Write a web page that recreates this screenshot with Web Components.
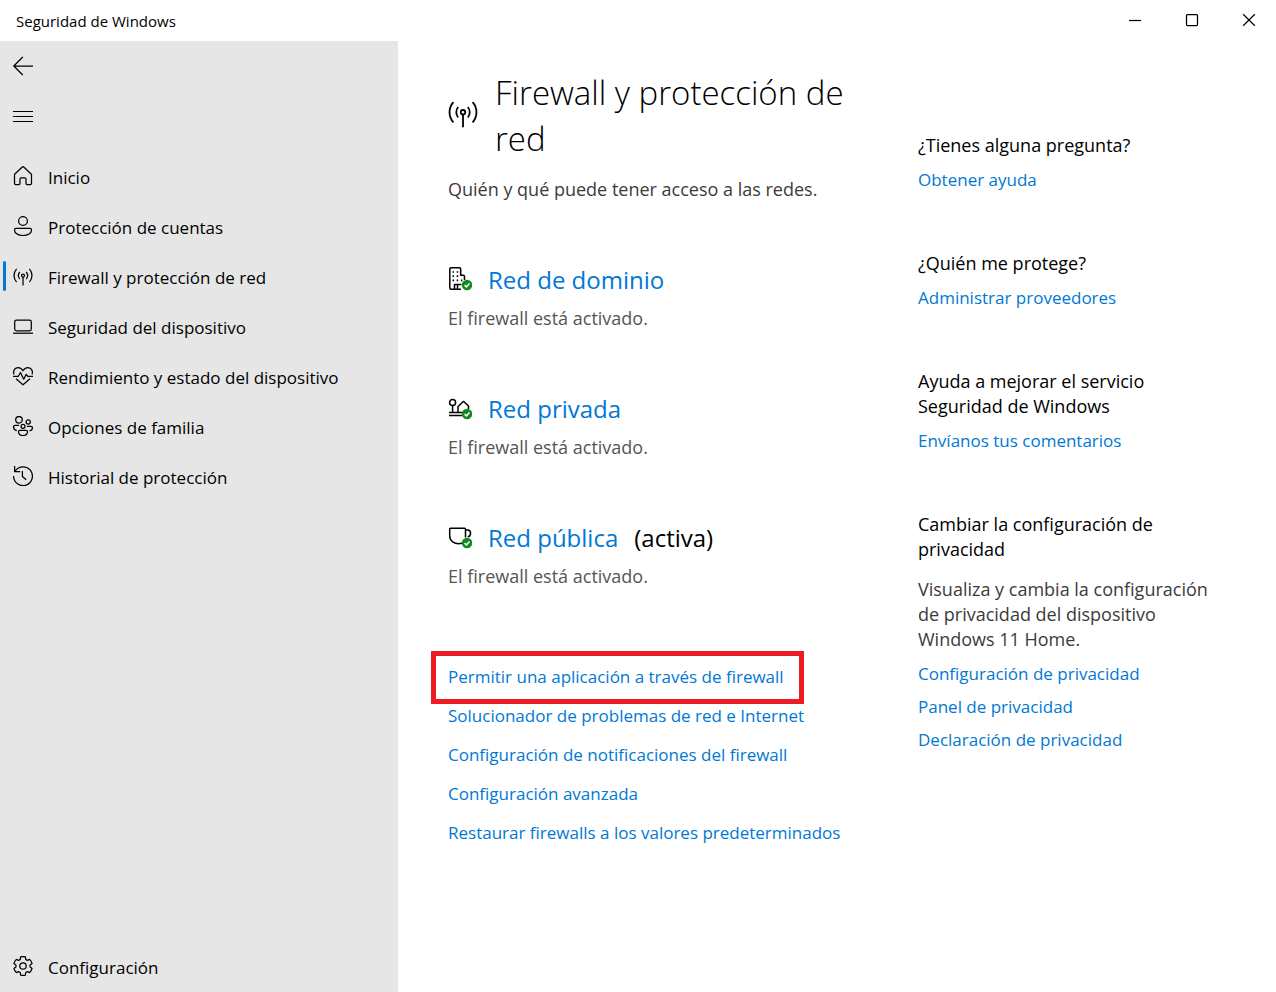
<!DOCTYPE html>
<html lang="es">
<head>
<meta charset="utf-8">
<meta name="viewport" content="width=device-width, initial-scale=1">
<title>Seguridad de Windows</title>
<style>
    html, body {
        height: 100%;
    }

    body {
        --accent: #0078D4;
        --sidebar: #E6E6E6;
        --success: #0F8A1F;
        --mark: #ED1C24;
        margin: 0;
        background: #FFFFFF;
        color: #000000;
        font-family: 'Segoe UI', 'Open Sans', 'Noto Sans', sans-serif;
        font-size: 17px;
        line-height: 25px;
    }
</style>
</head>
<body>
<security-app></security-app>

<script>
const ICONS = {
    back: '<path d="M20 10H.8M9.800 1 .8 10l9 9"/>',
    menu: '<path d="M0 5.500h20M0 10.500h20M0 15.500h20" stroke-width="1"/>',
    minimize: '<path d="M4 10.500h12"/>',
    maximize: '<rect x="4.500" y="4.500" width="11" height="11" rx="1"/>',
    close: '<path d="M4.200 4.200l11.600 11.600M15.800 4.200 4.200 15.800"/>',
    home: '<path d="M1.600 8.200 9 1.200q1-.9 2 0l7.400 7q.1.300.1.700v8.300q0 1.300-1.300 1.300h-2.900q-1.300 0-1.300-1.300v-4.400q0-1-1-1h-4q-1 0-1 1v4.400q0 1.300-1.300 1.300H2.800q-1.300 0-1.300-1.300V8.900q0-.4.100-.7z"/>',
    account: '<circle cx="10" cy="5" r="4.400"/><path d="M3 12.400h14q1.500 0 1.500 1.500c0 3.600-4 5.600-8.500 5.600s-8.500-2-8.500-5.600q0-1.500 1.500-1.500z"/>',
    antenna: '<circle cx="10" cy="9.500" r="1.500"/><path d="M10 11v8.500M6.800 6a5.400 5.400 0 0 0 0 7M13.200 6a5.400 5.400 0 0 1 0 7M3.600 2.800a10 10 0 0 0 0 13.400M16.400 2.800a10 10 0 0 1 0 13.400"/>',
    laptop: '<rect x="1.700" y="4" width="16.600" height="10.800" rx="1.800"/><path d="M0 17.200h20"/>',
    heart: '<path d="M.9 8.300C-.2 4.300 2.200 1.600 5.200 1.600c2 0 3.600 1 4.800 3.200 1.200-2.200 2.800-3.200 4.800-3.200 3 0 5.400 2.700 4.300 6.700M0 10.300h5.300L7.500 6.500l3.200 6.800 2.500-5 1.700 2H20M3 12.800l7 6 7-6"/>',
    family: '<circle cx="6" cy="3.800" r="3.300"/><circle cx="15.200" cy="6" r="2.100"/><circle cx="10" cy="10.300" r="2"/><path d="M6 9.300H2.200Q.6 9.300.6 10.900c0 2 1 3.300 3.200 3.800M13.800 10.300h4.200q1.400 0 1.400 1.400c0 1.800-1 2.800-2.900 3.200M7 14.300h6q1.500 0 1.500 1.500c0 2.400-2 3.700-4.500 3.700s-4.500-1.300-4.500-3.700q0-1.500 1.500-1.500z"/>',
    history: '<path d="M1.600 0v5.600h5.600M1.900 5.400A9.400 9.400 0 1 1 .6 10M9.400 5v5.500l3.800 3.300"/>',
    settings: '<circle cx="10" cy="10" r="3.200"/><path d="M7.600.9A9.400 9.400 0 0 1 12.400.9L12.700 3.300Q13.450 4 14.400 4.300L16.650 3.350A9.400 9.400 0 0 1 19.100 7.600L17.100 9Q16.900 10 17.100 11L19.100 12.400A9.400 9.400 0 0 1 16.650 16.650L14.400 15.700Q13.450 16 12.700 16.700L12.400 19.100A9.400 9.400 0 0 1 7.600 19.100L7.300 16.700Q6.550 16 5.600 15.700L3.350 16.650A9.400 9.400 0 0 1 .9 12.400L2.900 11Q3.100 10 2.900 9L.9 7.600A9.400 9.400 0 0 1 3.350 3.350L5.600 4.300Q6.550 4 7.300 3.300z"/>'
};

// The network icons share the same green check in the corner
const BADGE = '<circle cx="19" cy="18" r="5.200" fill="var(--success)" stroke="none"/><path d="M16.600 18.100l1.800 1.800 3.100-3.300" stroke="#FFFFFF" stroke-width="1.500"/>';

const NETWORK_ICONS = {
    domain: '<path d="M13 22.200H3q-1.200 0-1.200-1.200V2q0-1.200 1.200-1.200h8.500q1.200 0 1.200 1.200v6.200h2.500q1.300 0 1.300 1.300v3.500M6.500 22v-4.500h7M9.500 17.500V22"/><path d="M4.500 5h1.500M8.700 5h1.500M4.500 9.200h1.500M8.700 9.200h1.500M4.500 13.400h1.500M8.700 13.400h1.500M12.900 13.400h1.500" stroke-width="1.700"/>',
    home: '<circle cx="4.600" cy="6.500" r="3"/><path d="M4.600 9.500v7M1 16.500h14M1 19.500h13M10 16.500v-6l5-4.800q.5-.4 1 0l4.500 4.300v3"/>',
    cup: '<path d="M14 18.300C6.500 20 1.700 16 1.700 10.500V4q0-.8.8-.8h14.200q.8 0 .8.800v8.500M17.500 5h2.200c3.800 0 3.800 6.500 0 6.800"/>'
};

class SecIcon extends HTMLElement {
    constructor() {
        super();
        this.attachShadow({ mode: 'open' });
    }

    connectedCallback() {
        const network = NETWORK_ICONS[this.getAttribute('network')];
        const box = network ? '0 0 24 24' : '0 0 20 20';
        const shape = network ? network + BADGE : ICONS[this.getAttribute('name')];

        this.shadowRoot.innerHTML = `
            <style>
                :host {
                    display: block;
                    flex: none;
                    width: var(--icon-size, 20px);
                    height: var(--icon-size, 20px);
                }

                svg {
                    display: block;
                    width: 100%;
                    height: 100%;
                    fill: none;
                    stroke: currentColor;
                    stroke-width: var(--icon-stroke, 1.25);
                    stroke-linejoin: round;
                }
            </style>
            <svg viewBox="${box}" aria-hidden="true">${shape}</svg>
        `;
    }
}

class TitleBar extends HTMLElement {
    constructor() {
        super();
        this.attachShadow({ mode: 'open' });
        this.shadowRoot.innerHTML = `
            <style>
                :host {
                    display: flex;
                    justify-content: space-between;
                    height: 41px;
                    font-size: 15px;
                }

                .caption {
                    padding: 9px 16px 7px;
                }

                .controls {
                    display: flex;
                    gap: 3px;
                }

                button {
                    display: flex;
                    justify-content: center;
                    width: 54px;
                    padding: 10px 0;
                    border: none;
                    background: none;
                    color: inherit;
                }
            </style>
            <span class="caption"><slot></slot></span>
            <div class="controls">
                <button type="button" aria-label="Minimizar"><sec-icon name="minimize"></sec-icon></button>
                <button type="button" aria-label="Maximizar"><sec-icon name="maximize"></sec-icon></button>
                <button type="button" aria-label="Cerrar"><sec-icon name="close"></sec-icon></button>
            </div>
        `;
    }
}

class NavItem extends HTMLElement {
    constructor() {
        super();
        this.attachShadow({ mode: 'open' });
    }

    connectedCallback() {
        const active = this.hasAttribute('active');
        this.shadowRoot.innerHTML = `
            <style>
                :host {
                    display: block;
                }

                a {
                    position: relative;
                    display: flex;
                    align-items: center;
                    gap: 15px;
                    height: 50px;
                    padding-left: 13px;
                    color: inherit;
                    text-decoration: none;
                }

                a[aria-current]::before {
                    content: '';
                    position: absolute;
                    left: 3px;
                    top: 9px;
                    width: 3px;
                    height: 30px;
                    border-radius: 2px;
                    background: var(--accent);
                }

                sec-icon {
                    margin-bottom: 2px;
                }
            </style>
            <a href="#" ${active ? 'aria-current="page"' : ''}>
                <sec-icon name="${this.getAttribute('icon')}"></sec-icon>
                <slot></slot>
            </a>
        `;
    }
}

class SideNav extends HTMLElement {
    constructor() {
        super();
        this.attachShadow({ mode: 'open' });
        this.shadowRoot.innerHTML = `
            <style>
                :host {
                    display: flex;
                    flex-direction: column;
                    background: var(--sidebar);
                }

                button {
                    display: flex;
                    align-items: center;
                    height: 50px;
                    padding: 0 13px;
                    border: none;
                    background: none;
                    color: inherit;
                }

                nav {
                    flex: 1;
                    padding-top: 11px;
                }
            </style>
            <button type="button" aria-label="Atrás"><sec-icon name="back"></sec-icon></button>
            <button type="button" aria-label="Menú"><sec-icon name="menu"></sec-icon></button>
            <nav><slot></slot></nav>
            <slot name="footer"></slot>
        `;
    }
}

class PageHeader extends HTMLElement {
    constructor() {
        super();
        this.attachShadow({ mode: 'open' });
        this.shadowRoot.innerHTML = `
            <style>
                :host {
                    display: block;
                }

                .title {
                    display: flex;
                    align-items: center;
                    gap: 17px;
                }

                sec-icon {
                    --icon-size: 30px;
                    --icon-stroke: 1.2;
                    margin-bottom: 6px;
                }

                h1 {
                    margin: 0;
                    font-size: 33px;
                    font-weight: 300;
                    line-height: 46px;
                }

                p {
                    margin: 15px 0 0;
                    font-size: 18px;
                    color: #3B3B3B;
                }
            </style>
            <div class="title">
                <sec-icon name="antenna"></sec-icon>
                <h1><slot></slot></h1>
            </div>
            <p><slot name="summary"></slot></p>
        `;
    }
}

class NetworkProfile extends HTMLElement {
    constructor() {
        super();
        this.attachShadow({ mode: 'open' });
    }

    connectedCallback() {
        const note = this.getAttribute('note');
        this.shadowRoot.innerHTML = `
            <style>
                :host {
                    display: block;
                }

                h2 {
                    display: flex;
                    align-items: center;
                    gap: 16px;
                    margin: 0;
                    font-size: 24px;
                    font-weight: 400;
                    line-height: 32px;
                }

                sec-icon {
                    --icon-size: 24px;
                    --icon-stroke: 1.5;
                    margin-bottom: 2px;
                }

                a {
                    color: var(--accent);
                    text-decoration: none;
                }

                p {
                    margin: 10px 0 0;
                    font-size: 18px;
                    color: #555555;
                }
            </style>
            <h2>
                <sec-icon network="${this.getAttribute('icon')}"></sec-icon>
                <a href="#"><slot></slot></a>
                ${note ? `<span>${note}</span>` : ''}
            </h2>
            <p>El firewall está activado.</p>
        `;
    }
}

class TextLink extends HTMLElement {
    constructor() {
        super();
        this.attachShadow({ mode: 'open' });
        this.shadowRoot.innerHTML = `
            <style>
                :host {
                    display: block;
                    position: relative;
                    padding-bottom: 2px;
                    line-height: var(--link-height, 31px);
                }

                a {
                    color: var(--accent);
                    text-decoration: none;
                }

                /* red frame drawn over the link */
                :host([marked])::after {
                    content: '';
                    position: absolute;
                    top: -7px;
                    bottom: -7px;
                    left: -17px;
                    width: 363px;
                    border: 5px solid var(--mark);
                    pointer-events: none;
                }
            </style>
            <a href="#"><slot></slot></a>
        `;
    }
}

class HelpSection extends HTMLElement {
    constructor() {
        super();
        this.attachShadow({ mode: 'open' });
        this.shadowRoot.innerHTML = `
            <style>
                :host {
                    display: block;
                }

                h3 {
                    margin: 0 0 6px;
                    font-size: 18px;
                    font-weight: 400;
                }

                ::slotted(p) {
                    margin: 15px 0 6px;
                    font-size: 18px;
                    color: #3B3B3B;
                }
            </style>
            <h3><slot name="heading"></slot></h3>
            <slot></slot>
        `;
    }
}

class SecurityApp extends HTMLElement {
    constructor() {
        super();
        this.attachShadow({ mode: 'open' });
        this.shadowRoot.innerHTML = `
            <style>
                :host {
                    display: flex;
                    flex-direction: column;
                    min-height: 100%;
                }

                .body {
                    flex: 1;
                    display: grid;
                    grid-template-columns: 398px minmax(0, 1fr);
                }

                main {
                    display: grid;
                    grid-template-columns: minmax(0, 412px) minmax(0, 300px);
                    gap: 58px;
                    align-items: start;
                    padding: 29px 50px;
                }

                .profiles {
                    display: grid;
                    gap: 62px;
                    margin-top: 62px;
                }

                .links {
                    --link-height: 37px;
                    margin-top: 69px;
                }

                aside {
                    display: grid;
                    gap: 54px;
                    padding-top: 63px;
                }
            </style>
            <title-bar>Seguridad de Windows</title-bar>
            <div class="body">
                <side-nav>
                    <nav-item icon="home">Inicio</nav-item>
                    <nav-item icon="account">Protección de cuentas</nav-item>
                    <nav-item icon="antenna" active>Firewall y protección de red</nav-item>
                    <nav-item icon="laptop">Seguridad del dispositivo</nav-item>
                    <nav-item icon="heart">Rendimiento y estado del dispositivo</nav-item>
                    <nav-item icon="family">Opciones de familia</nav-item>
                    <nav-item icon="history">Historial de protección</nav-item>
                    <nav-item slot="footer" icon="settings">Configuración</nav-item>
                </side-nav>
                <main>
                    <section>
                        <page-header>Firewall y protección de red<span slot="summary">Quién y qué puede tener acceso a las redes.</span></page-header>
                        <div class="profiles">
                            <network-profile icon="domain">Red de dominio</network-profile>
                            <network-profile icon="home">Red privada</network-profile>
                            <network-profile icon="cup" note="(activa)">Red pública</network-profile>
                        </div>
                        <div class="links">
                            <text-link marked>Permitir una aplicación a través de firewall</text-link>
                            <text-link>Solucionador de problemas de red e Internet</text-link>
                            <text-link>Configuración de notificaciones del firewall</text-link>
                            <text-link>Configuración avanzada</text-link>
                            <text-link>Restaurar firewalls a los valores predeterminados</text-link>
                        </div>
                    </section>
                    <aside>
                        <help-section>
                            <span slot="heading">¿Tienes alguna pregunta?</span>
                            <text-link>Obtener ayuda</text-link>
                        </help-section>
                        <help-section>
                            <span slot="heading">¿Quién me protege?</span>
                            <text-link>Administrar proveedores</text-link>
                        </help-section>
                        <help-section>
                            <span slot="heading">Ayuda a mejorar el servicio Seguridad de Windows</span>
                            <text-link>Envíanos tus comentarios</text-link>
                        </help-section>
                        <help-section>
                            <span slot="heading">Cambiar la configuración de privacidad</span>
                            <p>Visualiza y cambia la configuración de privacidad del dispositivo Windows 11 Home.</p>
                            <text-link>Configuración de privacidad</text-link>
                            <text-link>Panel de privacidad</text-link>
                            <text-link>Declaración de privacidad</text-link>
                        </help-section>
                    </aside>
                </main>
            </div>
        `;
    }
}

customElements.define('sec-icon', SecIcon);
customElements.define('title-bar', TitleBar);
customElements.define('nav-item', NavItem);
customElements.define('side-nav', SideNav);
customElements.define('page-header', PageHeader);
customElements.define('network-profile', NetworkProfile);
customElements.define('text-link', TextLink);
customElements.define('help-section', HelpSection);
customElements.define('security-app', SecurityApp);
</script>
</body>
</html>
